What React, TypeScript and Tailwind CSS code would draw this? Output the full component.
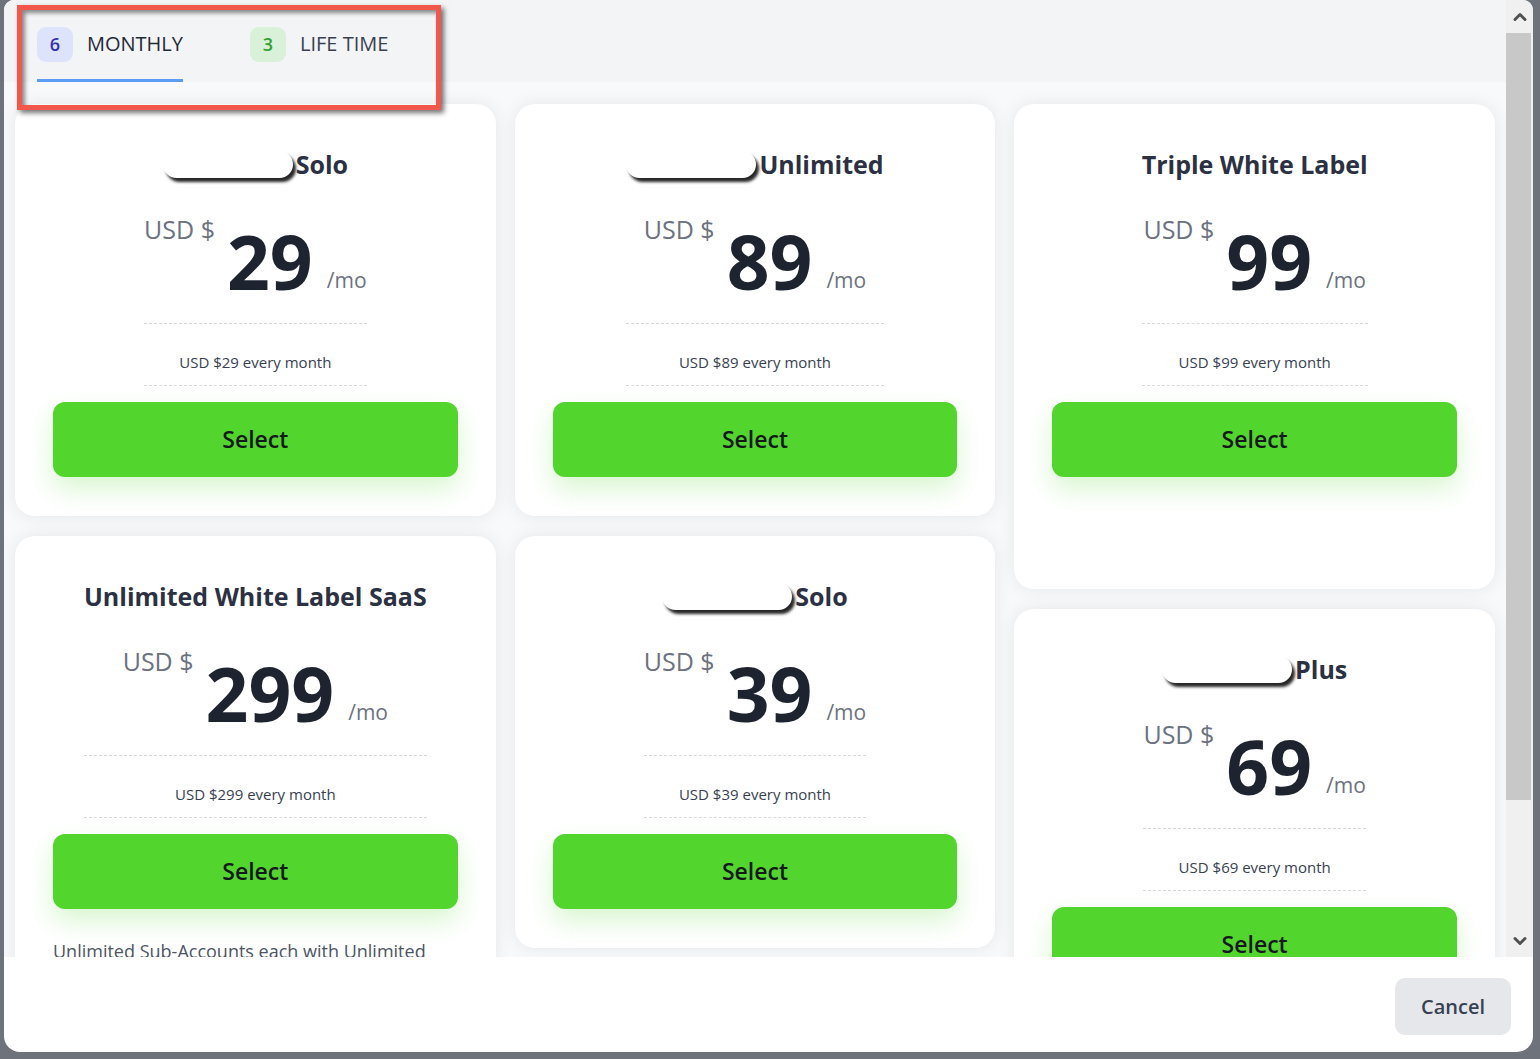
import { ChevronUp, ChevronDown } from 'lucide-react';

// ============================================
// Plan picker modal — monthly tab
// ============================================

interface Plan {
  name: string;
  price: number;
  pill?: boolean;
  description?: string;
  extra?: boolean;
}

const columns: Plan[][] = [
  [
    { name: 'Solo', price: 29, pill: true },
    { name: 'Unlimited White Label SaaS', price: 299, description: 'Unlimited Sub-Accounts each with Unlimited' },
  ],
  [
    { name: 'Unlimited', price: 89, pill: true },
    { name: 'Solo', price: 39, pill: true },
  ],
  [
    { name: 'Triple White Label', price: 99, extra: true },
    { name: 'Plus', price: 69, pill: true },
  ],
];

function PlanCard({ plan }: { plan: Plan }) {
  return (
    <div className="rounded-[20px] bg-white px-[38px] pt-[44px] pb-[39px] shadow-[0_0_18px_rgba(17,24,39,0.08)]">
      <div className="mx-auto flex w-fit flex-col items-center">
        {/* Title */}
        <div className="flex h-8 items-center">
          {plan.pill && (
            <span className="mr-[3px] block h-[27px] w-[130px] rounded-full bg-white shadow-[3px_4px_3px_rgba(0,0,0,0.85)]" />
          )}
          <span className="text-[25px] font-bold leading-8 text-[#2b3142]">{plan.name}</span>
        </div>

        {/* Price */}
        <div className="mt-[33px] flex w-full items-start justify-center border-b border-dashed border-[#d6d9de] pb-[25px]">
          <span className="text-[25px] leading-8 text-[#6b7280]">USD $</span>
          <span className="ml-[12px] mt-[11px] text-[75px] font-bold leading-[74px] text-[#1e2330]">{plan.price}</span>
          <span className="mb-1 ml-[14px] self-end text-[21px] leading-7 text-[#6b7280]">/mo</span>
        </div>

        <div className="w-full border-b border-dashed border-[#d6d9de] pt-[28px] pb-[13px] text-center text-[15px] leading-5 text-[#374151]">
          USD ${plan.price} every month
        </div>
      </div>

      <button
        type="button"
        className="mt-4 h-[75px] w-full rounded-[12px] bg-[#52d62e] text-[23px] font-semibold text-[#16181d] shadow-[0_12px_26px_rgba(82,214,46,0.22)]"
      >
        Select
      </button>

      {plan.description && (
        <p className="mt-[30px] text-[18px] leading-6 text-[#4b5563]">{plan.description}</p>
      )}
      {plan.extra && <div className="h-[73px]" />}
    </div>
  );
}

function Tab({ count, label, active, tone }: { count: number; label: string; active?: boolean; tone: 'blue' | 'green' }) {
  return (
    <div className={`flex h-full flex-col justify-center border-b-[3px] ${active ? 'border-[#5b9cf5]' : 'border-transparent'}`}>
      <div className="flex items-center gap-[14px] pt-[9px]">
        <span
          className={`flex h-[35px] w-[36px] items-center justify-center rounded-[9px] text-[18px] font-semibold ${
            tone === 'blue' ? 'bg-[#dde3fb] text-[#3430b0]' : 'bg-[#d8f1d8] text-[#33a133]'
          }`}
        >
          {count}
        </span>
        <span className={`text-[20px] ${active ? 'text-[#1f2937]' : 'text-[#374151]'}`}>{label}</span>
      </div>
    </div>
  );
}

export default function App() {
  return (
    <div className="h-[1059px] w-[1540px] overflow-hidden bg-[#6e737b] font-['Open_Sans',sans-serif]">
      <div className="relative ml-[4px] flex h-[1052px] w-[1529px] flex-col overflow-hidden rounded-b-[16px] rounded-t-[10px] bg-white">
        <div className="flex h-[957px]">
          {/* Scroll area */}
          <div className="flex flex-1 flex-col overflow-hidden bg-[#f8f9fa]">
            <div className="flex h-[82px] shrink-0 items-end gap-[67px] bg-[#f3f4f6] pl-[33px]">
              <Tab count={6} label="MONTHLY" active tone="blue" />
              <Tab count={3} label="LIFE TIME" tone="green" />
            </div>

            <div className="grid grid-cols-3 items-start gap-[19px] px-[11px] pt-[22px]">
              {columns.map((col, i) => (
                <div key={i} className="flex flex-col gap-5">
                  {col.map((plan) => (
                    <PlanCard key={plan.name + plan.price} plan={plan} />
                  ))}
                </div>
              ))}
            </div>
          </div>

          {/* Scrollbar */}
          <div className="flex w-[27px] flex-col bg-[#f0f0f0]">
            <div className="flex h-[33px] items-center justify-center">
              <ChevronUp className="h-5 w-5 text-[#505050]" strokeWidth={3.5} />
            </div>
            <div className="h-[767px] w-[25px] bg-[#c8c8c8]" />
            <div className="flex flex-1 items-end justify-center pb-[6px]">
              <ChevronDown className="h-5 w-5 text-[#505050]" strokeWidth={3.5} />
            </div>
          </div>
        </div>

        {/* Footer */}
        <div className="flex flex-1 items-start justify-end pr-[22px] pt-[21px]">
          <button
            type="button"
            className="h-[57px] w-[116px] rounded-[10px] bg-[#e5e7eb] text-[20px] font-semibold text-[#374151]"
          >
            Cancel
          </button>
        </div>

        {/* Annotation box */}
        <div className="pointer-events-none absolute left-[13px] top-[5px] h-[105px] w-[424px] border-[5px] border-[#f1574a] shadow-[3px_3px_5px_rgba(0,0,0,0.55),inset_3px_3px_4px_rgba(0,0,0,0.45)]" />
      </div>
    </div>
  );
}
